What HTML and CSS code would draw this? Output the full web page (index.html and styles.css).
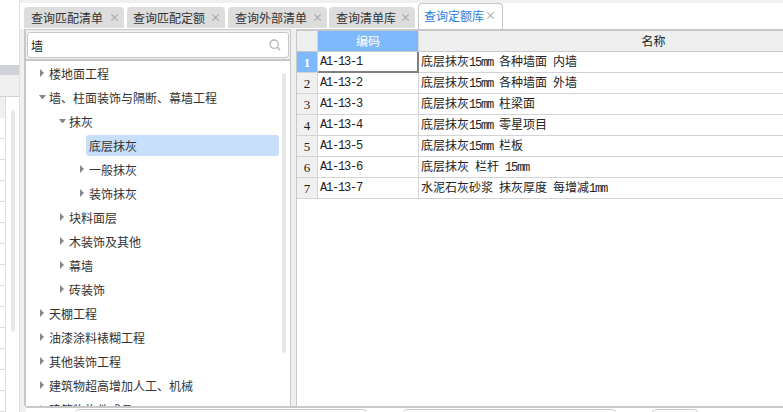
FILE: index.html
```html
<!doctype html>
<html lang="zh-CN">
<head>
    <meta charset="utf-8">
    <title>查询定额库</title>
    <link rel="stylesheet" href="styles.css">
</head>
<body>
<div class="page">
    <!-- the window behind the dialog, only its right edge shows -->
    <div class="backdrop">
        <div class="backdrop-band"></div>
        <div class="backdrop-head"></div>
        <div class="backdrop-rows"><div class="backdrop-scroll"></div></div>
    </div>

    <div class="dialog">
        <div class="tabs">
            <div class="tab tab-1">查询匹配清单<span class="tab-close">×</span></div>
            <div class="tab tab-2">查询匹配定额<span class="tab-close">×</span></div>
            <div class="tab tab-3">查询外部清单<span class="tab-close">×</span></div>
            <div class="tab tab-4">查询清单库<span class="tab-close">×</span></div>
            <div class="tab tab-active">查询定额库<span class="tab-close">×</span></div>
        </div>

        <div class="content">
            <div class="side">
                <div class="search">
                    <span class="search-text">墙</span>
                    <svg class="search-icon" width="12" height="12" viewBox="0 0 12 12">
                        <circle cx="5.2" cy="5.2" r="4.2" fill="none" stroke="#b8b8b8" stroke-width="1.3"/>
                        <path d="M8.3 8.3L11.2 11.2" stroke="#b8b8b8" stroke-width="1.5"/>
                    </svg>
                </div>
                <div class="tree">
                    <div class="tree-scroll"></div>
                    <div class="node lvl-0"><i class="arrow"></i><span class="label">楼地面工程</span></div>
                    <div class="node lvl-0"><i class="arrow open"></i><span class="label">墙、柱面装饰与隔断、幕墙工程</span></div>
                    <div class="node lvl-1"><i class="arrow open"></i><span class="label">抹灰</span></div>
                    <div class="node lvl-2"><span class="label selected">底层抹灰</span></div>
                    <div class="node lvl-2"><i class="arrow"></i><span class="label">一般抹灰</span></div>
                    <div class="node lvl-2"><i class="arrow"></i><span class="label">装饰抹灰</span></div>
                    <div class="node lvl-1"><i class="arrow"></i><span class="label">块料面层</span></div>
                    <div class="node lvl-1"><i class="arrow"></i><span class="label">木装饰及其他</span></div>
                    <div class="node lvl-1"><i class="arrow"></i><span class="label">幕墙</span></div>
                    <div class="node lvl-1"><i class="arrow"></i><span class="label">砖装饰</span></div>
                    <div class="node lvl-0"><i class="arrow"></i><span class="label">天棚工程</span></div>
                    <div class="node lvl-0"><i class="arrow"></i><span class="label">油漆涂料裱糊工程</span></div>
                    <div class="node lvl-0"><i class="arrow"></i><span class="label">其他装饰工程</span></div>
                    <div class="node lvl-0"><i class="arrow"></i><span class="label">建筑物超高增加人工、机械</span></div>
                    <div class="node lvl-0"><i class="arrow"></i><span class="label">建筑物构件成品</span></div>
                </div>
            </div>

            <div class="grid-wrap">
                <table class="grid">
                    <colgroup>
                        <col class="col-num">
                        <col class="col-code">
                        <col class="col-name">
                    </colgroup>
                    <thead>
                        <tr><th></th><th class="head-on">编码</th><th>名称</th></tr>
                    </thead>
                    <tbody>
                        <tr><td class="num num-on">1</td><td class="code cell-on">A1-13-1</td><td class="name">底层抹灰<span class="lat">15mm </span>各种墙面<span class="lat"> </span>内墙</td></tr>
                        <tr><td class="num">2</td><td class="code">A1-13-2</td><td class="name">底层抹灰<span class="lat">15mm </span>各种墙面<span class="lat"> </span>外墙</td></tr>
                        <tr><td class="num">3</td><td class="code">A1-13-3</td><td class="name">底层抹灰<span class="lat">15mm </span>柱梁面</td></tr>
                        <tr><td class="num">4</td><td class="code">A1-13-4</td><td class="name">底层抹灰<span class="lat">15mm </span>零星项目</td></tr>
                        <tr><td class="num">5</td><td class="code">A1-13-5</td><td class="name">底层抹灰<span class="lat">15mm </span>栏板</td></tr>
                        <tr><td class="num">6</td><td class="code">A1-13-6</td><td class="name">底层抹灰<span class="lat"> </span>栏杆<span class="lat"> 15mm</span></td></tr>
                        <tr><td class="num">7</td><td class="code">A1-13-7</td><td class="name">水泥石灰砂浆<span class="lat"> </span>抹灰厚度<span class="lat"> </span>每增减<span class="lat">1mm</span></td></tr>
                    </tbody>
                </table>
            </div>
        </div>

        <div class="footer">
            <div class="field field-a"></div>
            <div class="field field-b"></div>
            <div class="field field-c"></div>
        </div>
    </div>
</div>
</body>
</html>
```
FILE: styles.css
```css
html, body {
    margin: 0;
    padding: 0;
    height: 100%;
    overflow: hidden;
    background: #fff;
}

body {
    font-family: "Noto Sans CJK SC", "Liberation Sans", sans-serif;
    font-size: 12px;
    color: #333;
}

.page {
    display: flex;
    width: 783px;
    height: 412px;
    overflow: hidden;
}

/* backdrop window */
.backdrop {
    width: 19px;
    flex: none;
    display: flex;
    flex-direction: column;
    padding-top: 65px;
    border-right: 1px solid #e0e0e0;
    box-sizing: content-box;
}

.backdrop-band {
    height: 10px;
    background: #cfd2d6;
}

.backdrop-head {
    height: 21px;
    background: #f0f0f0;
    border-bottom: 1px solid #cfd2d6;
}

.backdrop-rows {
    flex: 1;
    display: flex;
    padding-left: 11px;
    background:
        linear-gradient(#f0f0f0, #f0f0f0) 0 0 / 5px 21px no-repeat,
        linear-gradient(#ddd, #ddd) 5px 0 / 1px 100% no-repeat,
        repeating-linear-gradient(#fff 0, #fff 20px, #ddd 20px, #ddd 21px) 0 0 / 5px 100% no-repeat;
}

.backdrop-scroll {
    width: 4px;
    height: 222px;
    margin-top: 13px;
    background: #e8e8e8;
    border-radius: 2px;
}

/* dialog */
.dialog {
    flex: 1;
    min-width: 0;
    display: flex;
    flex-direction: column;
    padding-top: 3px;
    background: #f0f0f0;
}

.tabs {
    height: 26px;
    flex: none;
    display: flex;
    align-items: flex-start;
    gap: 3px;
    padding-left: 4px;
    background: #fff;
}

.tab {
    height: 21px;
    margin-top: 4px;
    display: flex;
    align-items: center;
    justify-content: space-between;
    box-sizing: border-box;
    padding: 0 4px 0 7px;
    background: #ddd;
    border-radius: 4px 4px 0 0;
    line-height: 21px;
}

.tab-1 { width: 100px; }
.tab-2 { width: 98px; padding-left: 6px; }
.tab-3 { width: 99px; }
.tab-4 { width: 86px; margin-left: -1px; }

.tab-close {
    font-size: 11px;
    color: #999;
}

.tab-active {
    width: 85px;
    height: 26px;
    margin-top: 0;
    background: #fff;
    color: #2b7fdc;
    border: 1px solid #c8c8c8;
    border-bottom: 0;
    padding: 0 6px 2px 5px;
}

.content {
    flex: 1;
    min-height: 0;
    display: flex;
    padding-left: 4px;
}

/* left pane */
.side {
    width: 267px;
    flex: none;
    display: flex;
    flex-direction: column;
    box-sizing: border-box;
    border-left: 2px solid #c8c8c8;
    border-right: 1px solid #c8c8c8;
    border-top: 1px solid #c8c8c8;
}

.search {
    flex: none;
    height: 26px;
    margin: 2px 1px 0;
    display: flex;
    align-items: center;
    justify-content: space-between;
    box-sizing: border-box;
    padding: 0 7px 0 3px;
    background: #fff;
    border: 1px solid #c8c8c8;
    border-radius: 3px;
}

.search-text {
    font-size: 12px;
    color: #222;
}

.tree {
    position: relative;
    flex: 1;
    min-height: 0;
    overflow: hidden;
    margin-top: 1px;
    background: #fff;
    border-top: 2px solid #c8c8c8;
}

.tree-scroll {
    position: absolute;
    left: 256px;
    top: 12px;
    width: 4px;
    height: 280px;
    background: #e8e8e8;
    border-radius: 2px;
}

.node {
    height: 24px;
    display: flex;
    align-items: center;
    box-sizing: border-box;
}

.lvl-0 { padding-left: 14px; }
.lvl-1 { padding-left: 34px; }
.lvl-2 { padding-left: 54px; }

.arrow {
    width: 5px;
    height: 8px;
    flex: none;
    margin-right: 4px;
    box-sizing: border-box;
    border-left: 4px solid #888;
    border-top: 4px solid transparent;
    border-bottom: 4px solid transparent;
}

.arrow.open {
    width: 7px;
    height: 4px;
    margin-left: -1px;
    margin-right: 3px;
    border-left: 3.5px solid transparent;
    border-right: 3.5px solid transparent;
    border-top: 4px solid #888;
    border-bottom: 0;
}

.label {
    line-height: 21px;
    white-space: nowrap;
}

.selected {
    flex: 1;
    margin: 0 11px 0 6px;
    padding-left: 3px;
    height: 21px;
    background: #c8dffa;
    border-radius: 3px;
}

/* right grid */
.grid-wrap {
    flex: 1;
    min-width: 0;
    margin-left: 5px;
    overflow: hidden;
    background: #fff;
    border-left: 1px solid #c8c8c8;
    border-top: 2px solid #c8c8c8;
}

.grid {
    width: 592px;
    table-layout: fixed;
    border-collapse: separate;
    border-spacing: 0;
    font-size: 12px;
    color: #222;
}

.col-num { width: 21px; }
.col-code { width: 101px; }
.col-name { width: 470px; }

.grid th,
.grid td {
    height: 21px;
    padding: 0;
    box-sizing: border-box;
    white-space: nowrap;
    font-weight: normal;
    border-right: 1px solid #d4d4d4;
    border-bottom: 1px solid #d4d4d4;
    line-height: 14px;
    vertical-align: middle;
}

.grid th {
    background: #efefef;
    border-bottom-color: #c8c8c8;
    text-align: center;
}

.grid th.head-on {
    background: #7db9fb;
    color: #fff;
}

.grid td.num {
    background: #f0f0f0;
    text-align: center;
    font-family: "Liberation Serif", serif;
    font-size: 13px;
    padding-top: 2px;
}

.grid td.num-on {
    background: #7db9fb;
    color: #fff;
    font-weight: bold;
}

.grid td.code {
    padding-left: 2px;
    font-family: "Liberation Mono", monospace;
    letter-spacing: -1.2px;
}

.grid td.cell-on {
    border-color: #808080;
    box-shadow: inset -1px -1px 0 #808080;
}

.grid td.name {
    padding-left: 2px;
}

.lat {
    font-family: "Liberation Mono", monospace;
    letter-spacing: -1.2px;
    white-space: pre;
}

/* bottom bar */
.footer {
    height: 6px;
    flex: none;
    margin-left: 6px;
    display: flex;
    align-items: flex-start;
    box-sizing: border-box;
    padding-left: 49px;
    background: #fff;
    border-top: 2px solid #c8c8c8;
    overflow: hidden;
}

.field {
    height: 12px;
    margin-top: 1px;
    box-sizing: border-box;
    border: 1px solid #ccc;
    border-radius: 4px;
    flex: none;
}

.field-a { width: 292px; margin-right: 36px; }
.field-b { width: 213px; margin-right: 36px; }
.field-c { width: 46px; }
```
